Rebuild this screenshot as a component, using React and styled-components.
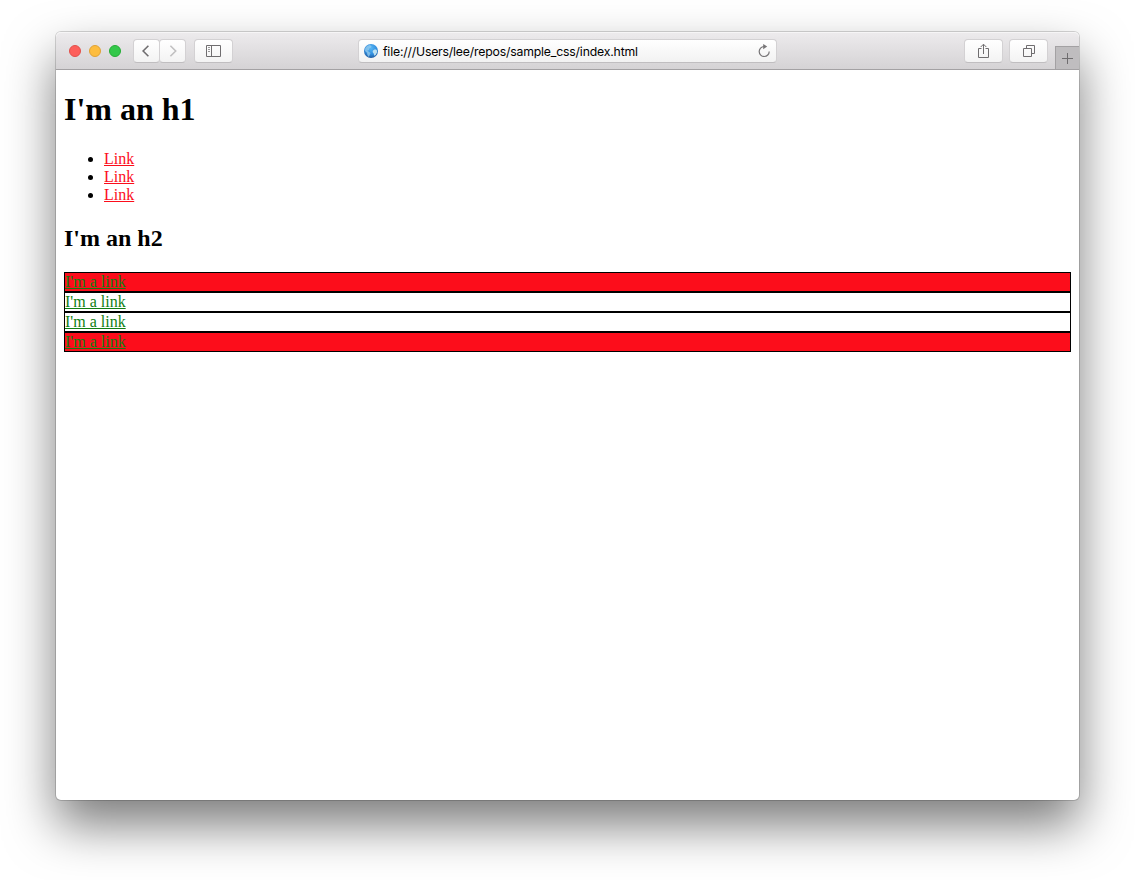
import React from 'react';
import styled, { createGlobalStyle } from 'styled-components';

const GlobalStyle = createGlobalStyle`
  * { box-sizing: border-box; }
  html { background: #fff; }
  body { margin: 0; overflow: hidden; }
`;

const Desktop = styled.div`
  width: 1135px;
  height: 880px;
  padding: 32px 0 0 56px;
  overflow: hidden;
  background: #fff;
`;

const Window = styled.div`
  width: 1023px;
  height: 768px;
  display: flex;
  flex-direction: column;
  border-radius: 5px;
  background: #fff;
  box-shadow: 0 0 0 1px rgba(0, 0, 0, 0.16), 0 25px 50px rgba(0, 0, 0, 0.52);
`;

const Toolbar = styled.header`
  height: 38px;
  flex: none;
  display: flex;
  align-items: flex-start;
  padding: 7px 0 0 13px;
  border-bottom: 1px solid #a3a1a3;
  border-radius: 5px 5px 0 0;
  background: linear-gradient(#edebed, #d5d3d5);
  box-shadow: inset 0 1px 0 #f6f5f6;
`;

const Lights = styled.div`
  display: flex;
  gap: 8px;
  padding-top: 6px;
  margin-right: 12px;
`;

const Light = styled.span`
  width: 12px;
  height: 12px;
  border-radius: 50%;
  background: ${(p) => p.$fill};
  border: 1px solid ${(p) => p.$edge};
`;

const Button = styled.button`
  width: ${(p) => p.$width}px;
  height: 24px;
  flex: none;
  display: flex;
  align-items: center;
  justify-content: center;
  margin: 0 ${(p) => p.$after || 0}px 0 0;
  padding: 0;
  border: 1px solid #d3d1d3;
  border-bottom-color: #c0bec0;
  border-radius: 4px;
  background: linear-gradient(#fff, #f3f3f3);
`;

const Address = styled.div`
  width: 419px;
  height: 24px;
  flex: none;
  display: flex;
  align-items: center;
  margin: 0 187px 0 125px;
  padding: 0 5px 0 5px;
  border: 1px solid #d3d1d3;
  border-bottom-color: #c0bec0;
  border-radius: 4px;
  background: linear-gradient(#fff, #f2f2f2);
`;

const Url = styled.span`
  flex: 1;
  padding: 1px 0 0 5px;
  font: 12.25px/22px Inter, "Liberation Sans", sans-serif;
  letter-spacing: -0.18px;
  color: #000;
`;

const NewTab = styled.div`
  width: 24px;
  height: 23px;
  margin: 7px 0 0 auto;
  display: flex;
  align-items: center;
  justify-content: center;
  border-left: 1px solid #a3a1a3;
  border-top: 1px solid #a3a1a3;
  background: #bfbdbf;
`;

const Page = styled.main`
  flex: 1;
  padding: 0 8px;
  font: 16px/18px "Liberation Serif", "Times New Roman", serif;
  color: #000;
`;

const Title = styled.h1`
  margin: 21px 0 22px;
  font-size: 32px;
  line-height: 37px;
`;

const List = styled.ul`
  margin: 0 0 20px;
  padding-left: 40px;
`;

const Subtitle = styled.h2`
  margin: 0 0 20px;
  font-size: 24px;
  line-height: 28px;
`;

const Link = styled.a`
  color: ${(p) => p.$color};
  text-decoration: underline;
`;

const Row = styled.div`
  height: 20px;
  border: 1px solid #000;
  background: ${(p) => (p.$filled ? '#fc0d1b' : 'transparent')};
`;

const Icon = ({ w, h, color = '#6f6d6f', children }) => (
  <svg width={w} height={h} viewBox={`0 0 ${w} ${h}`} fill="none" stroke={color}>
    {children}
  </svg>
);

const Globe = () => (
  <svg width="14" height="14" viewBox="0 0 14 14">
    <defs>
      <radialGradient id="ocean" cx="50%" cy="30%" r="75%">
        <stop offset="0" stopColor="#58b7f5" />
        <stop offset="0.6" stopColor="#2f8bdc" />
        <stop offset="1" stopColor="#1b4f90" />
      </radialGradient>
    </defs>
    <circle cx="7" cy="7" r="7" fill="url(#ocean)" />
    <path d="M1.2 4.2 3 2l2.7-1L7.6 2 7 3.6 5.3 4.5 5 6.2 3.3 6.4 4.8 7.8 6.5 9l-.8 2-1 2L3.4 11 3 8.7 1 7z" fill="#9ed0ee" opacity=".7" />
    <path d="m9 6.5 2-1.2 1.8.6.3 2.4-1.5 2.8-1.4.7-.5-2.2L8.6 8z" fill="#d3edf3" opacity=".85" />
  </svg>
);

const links = ['Link', 'Link', 'Link'];
const rows = [true, false, false, true];

export default function App() {
  return (
    <Desktop>
      <GlobalStyle />
      <Window>
        <Toolbar>
          <Lights>
            <Light $fill="#fd5f5b" $edge="#e2504b" />
            <Light $fill="#fdbd3f" $edge="#e0a235" />
            <Light $fill="#34c84a" $edge="#25ad35" />
          </Lights>
          <Button $width={27} $after={-1} aria-label="Back">
            <Icon w={9} h={12}><path d="M6.4.7 1.1 6l5.3 5.3" strokeWidth="1.6" /></Icon>
          </Button>
          <Button $width={27} $after={8} aria-label="Forward">
            <Icon w={9} h={12} color="#c1c0c1"><path d="M2.4.7 7.7 6l-5.3 5.3" strokeWidth="1.6" /></Icon>
          </Button>
          <Button $width={39} aria-label="Sidebar">
            <Icon w={15} h={12}>
              <path d="M.5.5h14v11H.5zM5.5.5v11" />
              <path d="M2 2.5h2M2 4.5h2M2 6.5h2" opacity=".7" />
            </Icon>
          </Button>
          <Address>
            <Globe />
            <Url>file:///Users/lee/repos/sample_css/index.html</Url>
            <Icon w={14} h={14} color="#777577">
              <path d="M7.5 2.5H7a5 5 0 1 0 5.2 5" strokeWidth="1.2" />
              <path d="M6.2 0v5.2L10.2 2.6z" fill="#777577" stroke="none" />
            </Icon>
          </Address>
          <Button $width={39} $after={6} aria-label="Share">
            <Icon w={13} h={16}>
              <path d="M4.5 5.5h-3v9h10v-9h-3M6.5 11V1.5M3.7 4l2.8-2.8L9.3 4" />
            </Icon>
          </Button>
          <Button $width={39} aria-label="Tabs">
            <Icon w={13} h={14}>
              <path d="M1.5 4.5h8v8h-8zM4.5 4.5v-3h8v8h-3" />
            </Icon>
          </Button>
          <NewTab>
            <Icon w={11} h={12}><path d="M5.5 1v11M0 6.5h11" /></Icon>
          </NewTab>
        </Toolbar>
        <Page>
          <Title>I'm an h1</Title>
          <List>
            {links.map((text, i) => (
              <li key={i}><Link $color="#fc0d1b" href="#">{text}</Link></li>
            ))}
          </List>
          <Subtitle>I'm an h2</Subtitle>
          {rows.map((filled, i) => (
            <Row key={i} $filled={filled}><Link $color="#0f7f12" href="#">I'm a link</Link></Row>
          ))}
        </Page>
      </Window>
    </Desktop>
  );
}
